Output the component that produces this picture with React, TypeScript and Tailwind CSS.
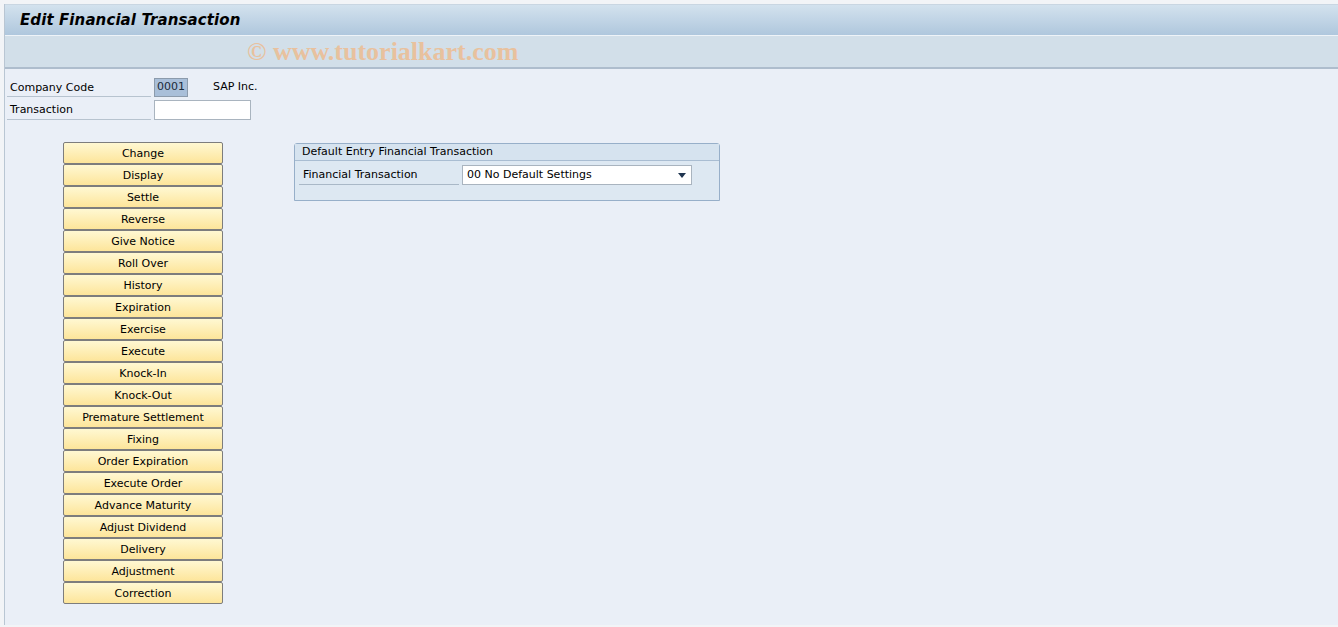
const BUTTONS = [
  "Change",
  "Display",
  "Settle",
  "Reverse",
  "Give Notice",
  "Roll Over",
  "History",
  "Expiration",
  "Exercise",
  "Execute",
  "Knock-In",
  "Knock-Out",
  "Premature Settlement",
  "Fixing",
  "Order Expiration",
  "Execute Order",
  "Advance Maturity",
  "Adjust Dividend",
  "Delivery",
  "Adjustment",
  "Correction",
];

const font = "font-['DejaVu_Sans',sans-serif]";

export default function App() {
  return (
    <div className={`h-[627px] w-[1338px] overflow-hidden bg-[#f2f4f7] pt-[4px] pl-[4px] text-[11px] text-black ${font}`}>
      <div className="flex h-[621px] flex-col border-l border-[#b9c6d3] bg-[#eaeff7]">
        {/* title bar */}
        <div className="flex h-[31px] items-center border-t border-[#c9d6e2] bg-gradient-to-b from-[#d3e2ee] to-[#afc7dd] pl-[15px]">
          <h1 className="text-[15px] font-bold italic tracking-[0.1px] text-black">
            Edit Financial Transaction
          </h1>
        </div>
        {/* toolbar */}
        <div className="flex h-[34px] items-center border-t border-[#eef3f8] border-b-2 border-b-[#aebdcd] bg-[#d2dfe9] pl-[242px]">
          <span className="font-['Liberation_Serif',serif] text-[26px] font-bold leading-none text-[#f0b886] opacity-75">
            © www.tutorialkart.com
          </span>
        </div>

        {/* header fields */}
        <div className="flex flex-col gap-[3px] pt-[9px] pl-[2px]">
          <div className="flex items-center">
            <div className="flex h-[19px] w-[144px] items-end border-b border-[#b7c3cf] pl-[3px]">
              Company Code
            </div>
            <div className="ml-[3px] flex h-[19px] w-[34px] items-center border border-[#8c9bac] bg-[#a9bfd9] pl-[2px] text-[#1b2a3a]">
              0001
            </div>
            <span className="ml-[25px]">SAP Inc.</span>
          </div>
          <div className="flex items-center">
            <div className="flex h-[19px] w-[144px] items-end border-b border-[#b7c3cf] pl-[3px]">
              Transaction
            </div>
            <div className="ml-[3px] h-[20px] w-[97px] border border-[#a9b4bf] bg-white" />
          </div>
        </div>

        {/* body */}
        <div className="flex pt-[22px] pl-[58px]">
          <div className="flex w-[160px] flex-col">
            {BUTTONS.map((b) => (
              <button
                key={b}
                type="button"
                className="flex h-[22px] items-center justify-center rounded-[2px] border border-[#7d7d7d] bg-gradient-to-b from-[#fff8d2] to-[#fde59a] text-[11px] leading-none text-black"
              >
                {b}
              </button>
            ))}
          </div>

          <div className="ml-[71px] mt-[1px] flex h-[58px] w-[426px] flex-col rounded-t-[3px] border border-[#97afc9] bg-[#dde8f2]">
            <div className="flex h-[17px] items-center border-b border-[#a9bdd2] bg-[#d6e3ef] pl-[7px]">
              Default Entry Financial Transaction
            </div>
            <div className="flex items-center pt-[4px] pl-[4px]">
              <div className="flex h-[19px] w-[160px] items-end border-b border-[#a9b8c7] pl-[4px]">
                Financial Transaction
              </div>
              <div className="ml-[3px] flex h-[20px] w-[230px] items-center justify-between border border-[#a9b4bf] bg-white pr-[5px] pl-[4px]">
                <span>00 No Default Settings</span>
                <svg width="8" height="5" viewBox="0 0 8 5">
                  <path d="M0 0H8L4 5Z" fill="#1f3550" />
                </svg>
              </div>
            </div>
          </div>
        </div>
      </div>
    </div>
  );
}
